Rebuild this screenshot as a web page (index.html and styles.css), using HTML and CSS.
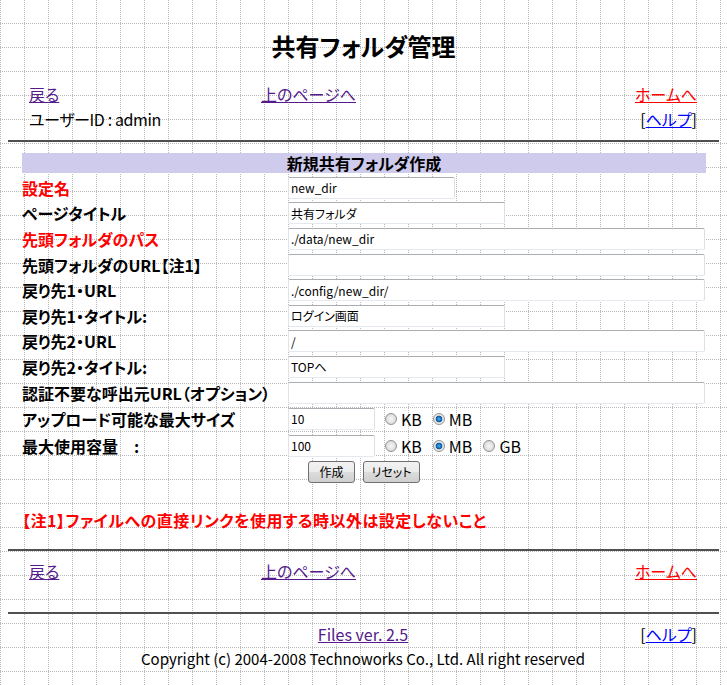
FILE: index.html
```html
<!DOCTYPE html>
<html lang="ja">
<head>
<meta charset="utf-8">
<title>共有フォルダ管理</title>
<link rel="stylesheet" href="styles.css">
</head>
<body>
<h1 class="title">共有フォルダ管理</h1>
<div class="nav nav-top">
  <a class="link visited" href="#">戻る</a>
  <a class="link visited" href="#">上のページへ</a>
  <a class="link home" href="#">ホームへ</a>
  <span class="user">ユーザーID : admin</span>
  <span></span>
  <span class="help">[<a class="link blue" href="#">ヘルプ</a>]</span>
</div>
<hr class="rule rule-top">
<form class="form">
  <div class="form-head">新規共有フォルダ作成</div>
  <div class="row"><label class="lbl req">設定名</label><input class="field w-s" type="text" value="new_dir"></div>
  <div class="row"><label class="lbl">ページタイトル</label><input class="field w-m" type="text" value="共有フォルダ"></div>
  <div class="row"><label class="lbl req">先頭フォルダのパス</label><input class="field w-l" type="text" value="./data/new_dir"></div>
  <div class="row"><label class="lbl">先頭フォルダのURL【注1】</label><input class="field w-l" type="text" value=""></div>
  <div class="row"><label class="lbl">戻り先1・URL</label><input class="field w-l" type="text" value="./config/new_dir/"></div>
  <div class="row"><label class="lbl">戻り先1・タイトル:</label><input class="field w-m" type="text" value="ログイン画面"></div>
  <div class="row"><label class="lbl">戻り先2・URL</label><input class="field w-l" type="text" value="/"></div>
  <div class="row"><label class="lbl">戻り先2・タイトル:</label><input class="field w-m" type="text" value="TOPへ"></div>
  <div class="row"><label class="lbl">認証不要な呼出元URL（オプション）</label><input class="field w-l" type="text" value=""></div>
  <div class="row tall"><label class="lbl">アップロード可能な最大サイズ</label><input class="field w-n" type="text" value="10">
    <span class="opt first"><input class="radio" type="radio" name="u1"><span class="unit">KB</span></span>
    <span class="opt"><input class="radio" type="radio" name="u1" checked><span class="unit">MB</span></span>
  </div>
  <div class="row tall"><label class="lbl">最大使用容量　:</label><input class="field w-n" type="text" value="100">
    <span class="opt first"><input class="radio" type="radio" name="u2"><span class="unit">KB</span></span>
    <span class="opt"><input class="radio" type="radio" name="u2" checked><span class="unit">MB</span></span>
    <span class="opt"><input class="radio" type="radio" name="u2"><span class="unit">GB</span></span>
  </div>
  <div class="actions">
    <button class="btn btn-make" type="button">作成</button>
    <button class="btn btn-reset" type="reset">リセット</button>
  </div>
</form>
<p class="note">【注1】ファイルへの直接リンクを使用する時以外は設定しないこと</p>
<hr class="rule rule-mid">
<div class="nav nav-bottom">
  <a class="link visited" href="#">戻る</a>
  <a class="link visited" href="#">上のページへ</a>
  <a class="link home" href="#">ホームへ</a>
</div>
<hr class="rule rule-foot">
<div class="footer">
  <span></span>
  <a class="link visited" href="#">Files ver. 2.5</a>
  <span class="help">[<a class="link blue" href="#">ヘルプ</a>]</span>
  <p class="copy">Copyright (c) 2004-2008 Technoworks Co., Ltd. All right reserved</p>
</div>
</body>
</html>
```

FILE: styles.css
```css
* { box-sizing: border-box; }

body {
  margin: 8px;
  font-family: "Noto Sans CJK JP", "Noto Sans", sans-serif;
  font-size: 16px;
  color: #000;
  font-feature-settings: "palt";
  background-color: #fff;
  background-image:
    conic-gradient(from 270deg at 1px 1px, #b9b9b9 90deg, transparent 0),
    conic-gradient(from 270deg at 1px 1px, #b9b9b9 90deg, transparent 0);
  background-size: 24px 2px, 2px 24px;
  background-position: 0 0, 0 23px;
}

.title {
  margin: 23px 0 0;
  height: 30px;
  line-height: 30px;
  font-size: 24px;
  font-weight: bold;
  text-align: center;
}

.link { text-decoration: underline; }
.visited { color: #551a8b; }
.home { color: #ff0000; }
.blue { color: #0000ff; }

.nav {
  display: grid;
  grid-template-columns: 232px 1fr auto;
  margin: 0 22px 0 21px;
}
.nav > * {
  height: 25px;
  line-height: 25px;
  white-space: nowrap;
}
.nav > *:nth-child(3n) { justify-self: end; }
.nav-top { margin-top: 21px; }
.nav-bottom { margin-top: 8px; }
.user { letter-spacing: -0.4px; }

.rule {
  display: block;
  height: 0;
  border: 0;
  border-top: 2px solid #505050;
  margin: 0;
}
.rule-top { margin-top: 8px; }
.rule-mid { margin-top: 19px; }
.rule-foot { margin-top: 28px; }

.form {
  margin: 11px 13px 0 14px;
}
.form-head {
  height: 20px;
  line-height: 20px;
  background: #cfcbed;
  text-align: center;
  font-weight: bold;
  margin-bottom: 2px;
}
.row {
  display: flex;
  align-items: center;
  height: 25.6px;
}
.row.tall { height: 27px; }
.lbl {
  flex: none;
  width: 266px;
  font-weight: bold;
  white-space: nowrap;
  line-height: 20px;
}
.lbl.req { color: #ff0000; }

.field {
  flex: none;
  height: 22px;
  margin: 0;
  padding: 0 2px;
  border: 1px solid;
  border-color: #abadb3 #dbdfe6 #e3e9ef #e2e3ea;
  border-radius: 2px;
  background: #fff;
  font-family: "Noto Sans CJK JP", sans-serif;
  font-size: 12px;
  color: #000;
  font-feature-settings: "palt";
}
.w-s { width: 167px; }
.w-m { width: 217px; }
.w-l { width: 417px; }
.w-n { width: 87px; }

.opt {
  display: inline-flex;
  align-items: center;
  margin-left: 11px;
}
.opt.first { margin-left: 10px; }
.radio {
  appearance: none;
  -webkit-appearance: none;
  width: 12px;
  height: 12px;
  margin: 0 4px 0 0;
  border-radius: 50%;
  border: 1px solid #929292;
  background: radial-gradient(circle, #f6f6f6 0, #e2e2e2 55%, #c8c8c8 100%);
}
.radio:checked {
  background: radial-gradient(circle, #49b4f2 0, #1a74c2 2px, #0d4f92 3.2px, #dadada 3.6px, #eeeeee 60%, #c8c8c8 100%);
}
.unit { line-height: 20px; }

.actions {
  display: flex;
  justify-content: center;
  align-items: center;
  gap: 8px;
  height: 25.2px;
}
.btn {
  height: 22px;
  padding: 0;
  border: 1px solid #707070;
  border-radius: 3px;
  background: linear-gradient(#f2f2f2 0, #ebebeb 50%, #dddddd 50%, #cfcfcf 100%);
  font-family: "Noto Sans CJK JP", sans-serif;
  font-size: 12px;
  color: #000;
  font-feature-settings: "palt";
}
.btn-make { width: 47px; }
.btn-reset { width: 57px; }

.note {
  margin: 25px 0 0 14px;
  color: #ff0000;
  font-weight: bold;
  line-height: 20px;
  letter-spacing: 0.5px;
}

.footer {
  display: grid;
  grid-template-columns: 1fr auto 1fr;
  margin: 8px 22px 0 21px;
}
.footer > * {
  height: 25px;
  line-height: 25px;
  white-space: nowrap;
}
.footer .help { justify-self: end; }
.footer .copy {
  grid-column: 1 / -1;
  margin: 0;
  height: 23px;
  line-height: 23px;
  text-align: center;
  font-size: 15px;
}
```
